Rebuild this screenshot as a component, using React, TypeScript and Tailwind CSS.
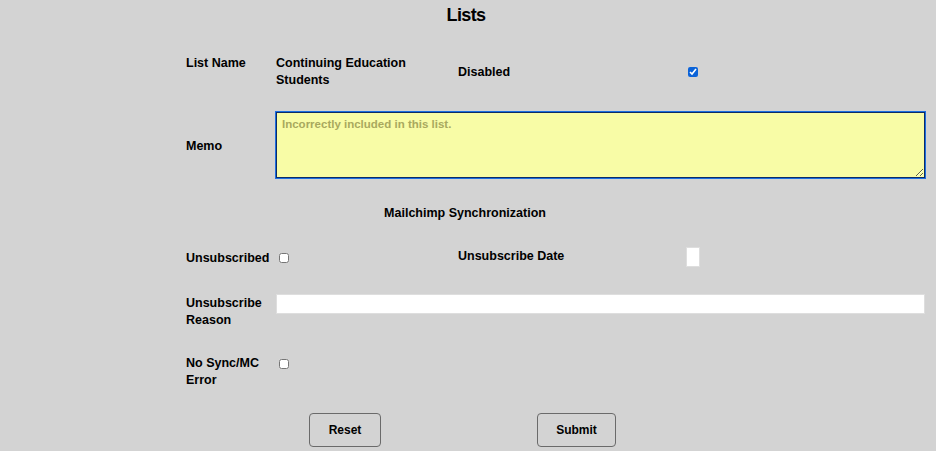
import { useState } from "react"

const ListEditPage = () => {
  const [disabled, setDisabled] = useState<boolean>(true)
  const [unsubscribed, setUnsubscribed] = useState<boolean>(false)
  const [noSync, setNoSync] = useState<boolean>(false)

  return (
    <div className="min-h-[451px] bg-[#d3d3d3] font-['Liberation_Sans',Arial,sans-serif] text-black">
      <h1 className="pt-[4px] pr-[4px] text-center text-[18px] font-bold leading-[22px] tracking-[-0.6px]">Lists</h1>

      <form className="pl-[186px] pr-[11px] text-[12.5px] font-bold leading-[17px]" onSubmit={e => e.preventDefault()}>
        {/* list name / disabled */}
        <div className="mt-[29px] grid grid-cols-[90px_182px_228px_1fr]">
          <div>List Name</div>
          <div>Continuing Education Students</div>
          <div className="self-center">Disabled</div>
          <div className="self-center flex items-center">
            <input
              type="checkbox"
              checked={disabled}
              onChange={() => setDisabled(!disabled)}
              className="ml-[2px] h-[10px] w-[10px] accent-[#0b63d8]"
            />
          </div>
        </div>

        {/* memo */}
        <div className="mt-[23px] flex items-center">
          <div className="w-[90px] shrink-0 pt-[2px]">Memo</div>
          <textarea
            placeholder="Incorrectly included in this list."
            className="h-[66px] w-full border border-[#0d2b66] bg-[#f8fca6] px-[5px] py-[4px] font-['Liberation_Sans',Arial,sans-serif] text-[11.5px] font-bold leading-[14px] outline outline-1 outline-[#1b6ee0] placeholder:text-[#a9a95e]"
          />
        </div>

        <h2 className="mt-[27px] ml-[-186px] mr-[-11px] pr-[6px] text-center">Mailchimp Synchronization</h2>

        {/* unsubscribed / date */}
        <div className="mt-[24px] grid grid-cols-[90px_182px_228px_1fr] items-center">
          <div className="pt-[4px]">Unsubscribed</div>
          <div className="flex items-center pt-[2px]">
            <input
              type="checkbox"
              checked={unsubscribed}
              onChange={() => setUnsubscribed(!unsubscribed)}
              className="ml-[3px] h-[10px] w-[10px] accent-[#0b63d8]"
            />
          </div>
          <div>Unsubscribe Date</div>
          <div>
            <input type="text" className="block h-[20px] w-[14px] border border-[#dedede] bg-white" />
          </div>
        </div>

        {/* reason */}
        <div className="mt-[26px] flex items-start">
          <div className="w-[90px] shrink-0 pt-[2px]">Unsubscribe<br />Reason</div>
          <input type="text" className="mt-[1px] block h-[20px] w-full border border-[#dedede] bg-white" />
        </div>

        {/* no sync */}
        <div className="mt-[26px] flex items-start">
          <div className="w-[90px] shrink-0">No Sync/MC<br />Error</div>
          <input
            type="checkbox"
            checked={noSync}
            onChange={() => setNoSync(!noSync)}
            className="ml-[3px] mt-[4px] h-[10px] w-[10px] accent-[#0b63d8]"
          />
        </div>

        <div className="mt-[24px] flex pl-[123px] gap-[156px]">
          <button type="reset" className="h-[34px] w-[72px] rounded-[4px] border border-[#6a6a6a] text-[12px] font-bold">
            Reset
          </button>
          <button type="submit" className="h-[34px] w-[79px] rounded-[4px] border border-[#6a6a6a] text-[12px] font-bold">
            Submit
          </button>
        </div>
      </form>
    </div>
  )
}

export default ListEditPage
